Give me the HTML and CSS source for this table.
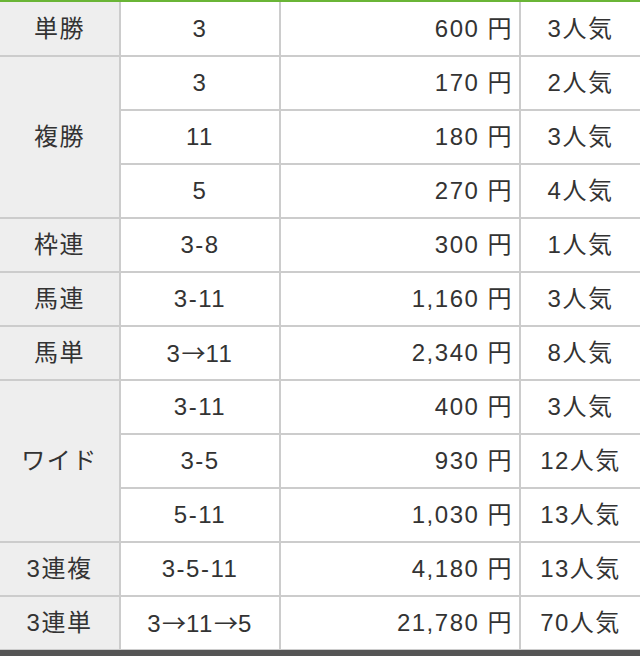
FILE: index.html
```html
<!DOCTYPE html>
<html lang="ja">
<head>
<meta charset="utf-8">
<title>払戻</title>
<link rel="stylesheet" href="styles.css">
</head>
<body>
<div class="topbar"></div>
<table class="payout">
  <colgroup>
    <col class="c-type">
    <col class="c-num">
    <col class="c-yen">
    <col class="c-pop">
  </colgroup>
  <tbody>
    <tr class="first"><th>単勝</th><td class="num">3</td><td class="yen">600 円</td><td class="pop">3人気</td></tr>
    <tr><th rowspan="3">複勝</th><td class="num">3</td><td class="yen">170 円</td><td class="pop">2人気</td></tr>
    <tr><td class="num">11</td><td class="yen">180 円</td><td class="pop">3人気</td></tr>
    <tr><td class="num">5</td><td class="yen">270 円</td><td class="pop">4人気</td></tr>
    <tr><th>枠連</th><td class="num">3-8</td><td class="yen">300 円</td><td class="pop">1人気</td></tr>
    <tr><th>馬連</th><td class="num">3-11</td><td class="yen">1,160 円</td><td class="pop">3人気</td></tr>
    <tr><th>馬単</th><td class="num">3<span class="arrow">→</span>11</td><td class="yen">2,340 円</td><td class="pop">8人気</td></tr>
    <tr><th rowspan="3">ワイド</th><td class="num">3-11</td><td class="yen">400 円</td><td class="pop">3人気</td></tr>
    <tr><td class="num">3-5</td><td class="yen">930 円</td><td class="pop">12人気</td></tr>
    <tr><td class="num">5-11</td><td class="yen">1,030 円</td><td class="pop">13人気</td></tr>
    <tr><th>3連複</th><td class="num">3-5-11</td><td class="yen">4,180 円</td><td class="pop">13人気</td></tr>
    <tr><th>3連単</th><td class="num">3<span class="arrow">→</span>11<span class="arrow">→</span>5</td><td class="yen">21,780 円</td><td class="pop">70人気</td></tr>
  </tbody>
</table>
<div class="bottomline"></div>
<div class="bottombar"></div>
</body>
</html>
```

FILE: styles.css
```css
html, body {
  margin: 0;
  padding: 0;
  background: #ffffff;
}

body {
  width: 640px;
  height: 656px;
  overflow: hidden;
  font-family: "Liberation Sans", "Noto Sans CJK JP", sans-serif;
  color: #333333;
}

.topbar {
  height: 2px;
  background: #6ab536;
}

.payout {
  width: 640px;
  table-layout: fixed;
  border-collapse: collapse;
  border-style: hidden;
}

.c-type { width: 120px; }
.c-num { width: 160px; }
.c-yen { width: 240px; }
.c-pop { width: 120px; }

.payout th,
.payout td {
  height: 52px;
  padding: 0;
  border: 2px solid #cccccc;
  font-size: 24px;
  font-weight: normal;
  letter-spacing: 1.5px;
  line-height: 1;
  vertical-align: middle;
}

.payout .first th,
.payout .first td {
  height: 53px;
}

.payout th {
  background: #eeeeee;
  text-align: center;
}

.num {
  text-align: center;
}

.arrow {
  font-family: "Noto Sans CJK JP", sans-serif;
  font-size: 24px;
  letter-spacing: 0;
}

.payout .yen {
  text-align: right;
  padding-right: 6px;
}

.pop {
  text-align: center;
}

.bottomline {
  height: 1px;
  background: #cccccc;
}

.bottombar {
  height: 8px;
  background: #555555;
}
```
